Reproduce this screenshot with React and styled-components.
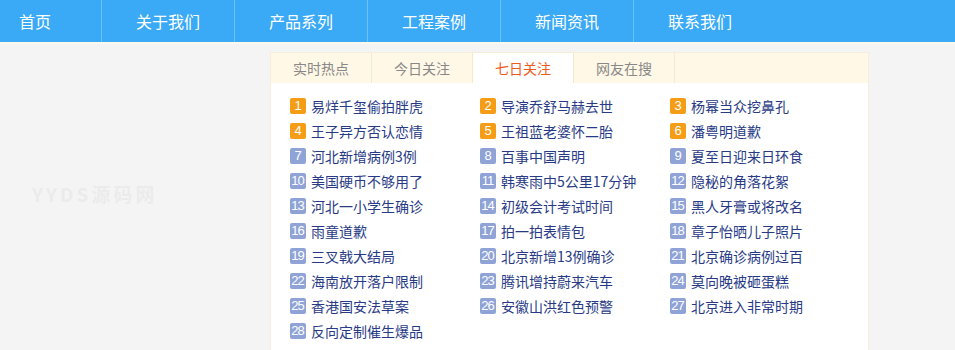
import React, { useState } from "react";
import styled, { createGlobalStyle } from "styled-components";

const GlobalStyle = createGlobalStyle`
  body {
    margin: 0;
    background: #f4f4f4;
    font-family: "Noto Sans CJK SC", "Liberation Sans", sans-serif;
    overflow: hidden;
  }
`;

const NavBar = styled.nav`
  display: flex;
  height: 42px;
  background: #3aa9f6;
  border-bottom: 2px solid #fbf9ee;
`;

const NavItem = styled.a`
  display: flex;
  align-items: center;
  justify-content: ${(p) => (p.$first ? "flex-start" : "center")};
  width: ${(p) => (p.$first ? "82px" : "132px")};
  padding-left: ${(p) => (p.$first ? "19px" : "0")};
  border-left: ${(p) => (p.$first ? "none" : "1px solid #6cc1fa")};
  color: #fff;
  font-size: 16px;
  text-decoration: none;
`;

const Main = styled.div`
  display: flex;
  padding: 8px 0 0 270px;
`;

const Watermark = styled.div`
  position: fixed;
  left: 32px;
  top: 180px;
  color: #ebebeb;
  font-size: 19px;
  font-weight: bold;
  letter-spacing: 3px;
`;

const Panel = styled.div`
  width: 597px;
  background: #fff;
  border: 1px solid #f6eedb;
  border-top: none;
  height: 300px;
`;

const TabBar = styled.div`
  display: flex;
  height: 30px;
  background: #fff8e6;
  border-top: 1px solid #f6eedb;
`;

const Tab = styled.button`
  width: 101px;
  height: 30px;
  border: none;
  border-right: 1px solid #f3e9cf;
  background: ${(p) => (p.$active ? "#fff" : "transparent")};
  color: ${(p) => (p.$active ? "#ee5b1f" : "#888")};
  font-family: inherit;
  font-size: 14px;
  padding: 0;
  cursor: pointer;
`;

const List = styled.ol`
  display: grid;
  grid-template-columns: repeat(3, 190px);
  grid-auto-rows: 25px;
  margin: 0;
  padding: 10px 0 0 19px;
  list-style: none;
`;

const Item = styled.li`
  display: flex;
  align-items: center;
  gap: 5px;
  color: #283a86;
  font-size: 14px;
  white-space: nowrap;
`;

const Badge = styled.span`
  display: inline-flex;
  align-items: center;
  justify-content: center;
  width: 16px;
  height: 16px;
  border-radius: 2px;
  background: ${(p) => (p.$hot ? "#f59d16" : "#8fa3d6")};
  color: #fff;
  font-size: 13px;
  font-family: "Liberation Sans", sans-serif;
  letter-spacing: -1px;
  text-indent: -1px;
`;

const navs = ["首页", "关于我们", "产品系列", "工程案例", "新闻资讯", "联系我们"];
const tabs = ["实时热点", "今日关注", "七日关注", "网友在搜"];
const items = [
  "易烊千玺偷拍胖虎", "导演乔舒马赫去世", "杨幂当众挖鼻孔",
  "王子异方否认恋情", "王祖蓝老婆怀二胎", "潘粤明道歉",
  "河北新增病例3例", "百事中国声明", "夏至日迎来日环食",
  "美国硬币不够用了", "韩寒雨中5公里17分钟", "隐秘的角落花絮",
  "河北一小学生确诊", "初级会计考试时间", "黑人牙膏或将改名",
  "雨童道歉", "拍一拍表情包", "章子怡晒儿子照片",
  "三叉戟大结局", "北京新增13例确诊", "北京确诊病例过百",
  "海南放开落户限制", "腾讯增持蔚来汽车", "莫向晚被砸蛋糕",
  "香港国安法草案", "安徽山洪红色预警", "北京进入非常时期",
  "反向定制催生爆品",
];

export default function App() {
  const [active, setActive] = useState(2);
  return (
    <>
      <GlobalStyle />
      <NavBar>
        {navs.map((n, i) => (
          <NavItem key={n} $first={i === 0} href="#">{n}</NavItem>
        ))}
      </NavBar>
      <Watermark>YYDS源码网</Watermark>
      <Main>
        <Panel>
          <TabBar>
            {tabs.map((t, i) => (
              <Tab key={t} $active={i === active} onClick={() => setActive(i)}>{t}</Tab>
            ))}
          </TabBar>
          <List>
            {items.map((t, i) => (
              <Item key={t}>
                <Badge $hot={i < 6}>{i + 1}</Badge>
                {t}
              </Item>
            ))}
          </List>
        </Panel>
      </Main>
    </>
  );
}
